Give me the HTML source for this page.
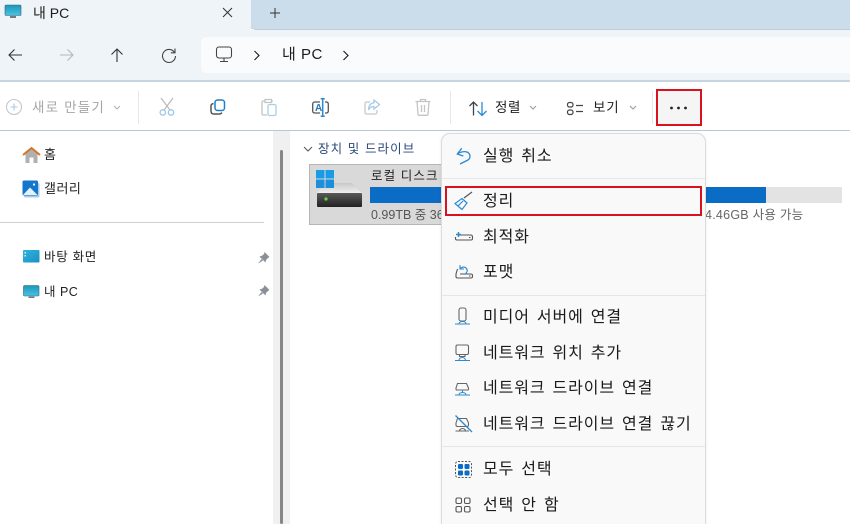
<!DOCTYPE html>
<html lang="ko"><head><meta charset="utf-8"><style>
html,body{margin:0;padding:0;width:850px;height:524px;overflow:hidden;background:#fff}
#w{position:absolute;left:0;top:0;width:850px;height:524px;overflow:hidden;background:#fff;font-family:"Liberation Sans","Noto Sans CJK KR",sans-serif;color:#1c1c1c}
.a{position:absolute}
.t{position:absolute;white-space:pre;line-height:20px;height:20px}
.m{font-size:16px;left:483px;letter-spacing:.9px;word-spacing:1.700px;color:#1a1a1a;margin-top:2px}
.s{font-size:12.5px;color:#222}
svg{position:absolute;overflow:visible;fill:none}
</style></head><body><div id="w">
<div class="a" style="left:0;top:0;width:850px;height:29px;background:#cbdcea"></div>
<div class="a" style="left:0;top:0;width:251px;height:30px;background:#eff4f9"></div>
<div class="a" style="left:251px;top:0;width:599px;height:29px;background:#cbdcea;border-bottom-left-radius:5px;border-bottom:1px solid #bccddb"></div>
<div class="a" style="left:0;top:30px;width:850px;height:50px;background:#eff4f9"></div>
<div class="a" style="left:201px;top:37px;width:649px;height:36px;background:#f9fbfd;border-radius:5px 0 0 5px"></div>
<div class="a" style="left:0;top:80px;width:850px;height:2px;background:#c6d5e0"></div>
<div class="a" style="left:0;top:130px;width:850px;height:1px;background:#b5c8d8"></div>

<svg style="left:5px;top:5px" width="17" height="15"><defs><linearGradient id="g" x1="0" y1="0" x2="0" y2="1"><stop offset="0" stop-color="#1b97b8"/><stop offset="1" stop-color="#48c3e6"/></linearGradient></defs><rect x="0" y="0" width="16" height="10.500" rx="1" fill="url(#g)" stroke="#3a6272" stroke-width=".6"/><rect x="5" y="11" width="6" height="2" fill="#6f7c84"/></svg>
<div class="t" style="left:33px;top:3px;font-size:14px">내 PC</div>
<svg style="left:223px;top:8px" width="9" height="9" stroke="#333" stroke-width="1"><path d="M0 0L9 9M9 0L0 9"/></svg>
<svg style="left:270px;top:8px" width="10" height="10" stroke="#333" stroke-width="1"><path d="M5 0V10M0 5H10"/></svg>

<svg style="left:7px;top:47px" width="16" height="16" stroke="#333" stroke-width="1.100"><path d="M15 8H2M7.500 2.500L2 8L7.500 13.500"/></svg>
<svg style="left:59px;top:47px" width="16" height="16" stroke="#b4b8bc" stroke-width="1.100"><path d="M1 8H14M8.500 2.500L14 8L8.500 13.500"/></svg>
<svg style="left:109px;top:47px" width="16" height="16" stroke="#333" stroke-width="1.100"><path d="M8 15V2M2.500 7.500L8 2L13.500 7.500"/></svg>
<svg style="left:161px;top:47px" width="16" height="16" stroke="#444" stroke-width="1.100"><path d="M13.500 5.500A6.500 6.500 0 1 0 14.500 9M14 1.500V5.800H9.800"/></svg>
<svg style="left:216px;top:46px" width="17" height="17" stroke="#444" stroke-width="1.100"><rect x=".5" y="1" width="15" height="11" rx="2.500"/><path d="M8 12V15M4 15.500H12"/></svg>
<svg style="left:253px;top:50px" width="8" height="11" stroke="#222" stroke-width="1.200"><path d="M1.500 1L6 5.500L1.500 10"/></svg>
<div class="t" style="left:282px;top:45px;font-size:15px;letter-spacing:.5px">내 PC</div>
<svg style="left:342px;top:50px" width="8" height="11" stroke="#222" stroke-width="1.200"><path d="M1.500 1L6 5.500L1.500 10"/></svg>

<svg style="left:6px;top:99px" width="17" height="17" stroke="#c4c8cc" stroke-width="1.100"><circle cx="8" cy="8" r="7.500"/><path d="M8 4.500V11.500M4.500 8H11.500" stroke="#a9cbe6"/></svg>
<div class="t" style="left:32px;top:98px;font-size:13.500px;color:#a6a6a6;letter-spacing:1.200px">새로 만들기</div>
<svg style="left:113px;top:105px" width="8" height="5" stroke="#b0b0b0"><path d="M1 1L4 4L7 1"/></svg>
<div class="a" style="left:138px;top:91px;width:1px;height:33px;background:#e8e8e8"></div>
<svg style="left:159px;top:98px" width="16" height="19" stroke="#bcbcbc" stroke-width="1.300"><path d="M2 0L11 12M14 0L5 12"/><circle cx="3.800" cy="14.500" r="2.700" stroke="#9cc6e6"/><circle cx="12" cy="14.500" r="2.700" stroke="#9cc6e6"/></svg>
<svg style="left:210px;top:99px" width="16" height="17" stroke-width="1.500"><path d="M3.500 4.500C1.800 4.800 1 5.700 1 7V12C1 14 2 15 4 15H9.500C10.500 15 11.300 14.500 11.800 13.500" stroke="#555"/><rect x="5" y="1" width="9.500" height="10.500" rx="2.500" stroke="#1f7fc8"/></svg>
<svg style="left:261px;top:98px" width="16" height="19" stroke-width="1.300"><path d="M4 3H2.500C1.500 3 1 3.500 1 4.500V15.500C1 16.500 1.500 17 2.500 17H6M12 3H10.500M4 1.500H10.500V4.500H4Z" stroke="#c4c4c4"/><rect x="7" y="6.500" width="8" height="11" rx="1.500" stroke="#a8cfea"/></svg>
<svg style="left:312px;top:98px" width="18" height="20" stroke-width="1.300"><path d="M8 4H3C1.500 4 .7 4.800 .7 6V13C.7 14.200 1.500 15 3 15H8M13 4H14C15.500 4 16.300 4.800 16.300 6V13C16.300 14.200 15.500 15 14 15H13" stroke="#555"/><path d="M10.700 1V18M8.700 .7H12.700M8.700 18.300H12.700" stroke="#2b8ad2" stroke-width="1.500"/><text x="3" y="13" font-size="10" font-weight="bold" fill="#2378bd" stroke="none" font-family="Liberation Sans">A</text></svg>
<svg style="left:364px;top:99px" width="17" height="17" stroke-width="1.300"><path d="M6 3H3C1.700 3 1 3.700 1 5V13C1 14.300 1.700 15 3 15H11C12.300 15 13 14.300 13 13V11" stroke="#c8c8c8"/><path d="M10 1L15.500 5.500L10 10V7.500C7.500 7.500 5.500 8.500 4.500 11C4.500 7 6.500 4 10 3.800Z" stroke="#a4cbe8"/></svg>
<svg style="left:415px;top:98px" width="16" height="18" stroke="#c4c4c4" stroke-width="1.300"><path d="M.5 3.500H15.500M5.500 3.500V1.500H10.500V3.500M2 3.500L3 16C3 16.800 3.500 17.300 4.300 17.300H11.700C12.500 17.300 13 16.800 13 16L14 3.500M6.500 7V14M9.500 7V14"/></svg>
<div class="a" style="left:450px;top:91px;width:1px;height:33px;background:#e8e8e8"></div>
<svg style="left:469px;top:101px" width="18" height="16" stroke-width="1.300"><path d="M4.500 14.500V1M.5 5L4.500 1L8.500 5" stroke="#444"/><path d="M13 1V14.500M8.500 10L13 14.500L17.500 10" stroke="#2b8ad2"/></svg>
<div class="t" style="left:495px;top:98px;font-size:13.500px;letter-spacing:.6px;color:#222">정렬</div>
<svg style="left:529px;top:105px" width="8" height="5" stroke="#999"><path d="M1 1L4 4L7 1"/></svg>
<svg style="left:566px;top:101px" width="18" height="15" stroke-width="1.200"><rect x="1.500" y="1.500" width="5.500" height="4.500" rx="2" stroke="#444"/><rect x="1.500" y="9" width="5.500" height="4.500" rx="2" stroke="#444"/><path d="M10 4.500H17M10 10.500H17" stroke="#444"/></svg>
<div class="t" style="left:593px;top:98px;font-size:13.500px;letter-spacing:.8px;color:#222">보기</div>
<svg style="left:629px;top:105px" width="8" height="5" stroke="#999"><path d="M1 1L4 4L7 1"/></svg>
<div class="a" style="left:652px;top:91px;width:1px;height:33px;background:#e8e8e8"></div>
<div class="a" style="left:656px;top:89px;width:46px;height:37px;box-sizing:border-box;background:#f5f5f5;border:2px solid #d9121f"></div>
<svg style="left:669px;top:106px" width="20" height="4"><circle cx="2.500" cy="2" r="1.400" fill="#222"/><circle cx="9.500" cy="2" r="1.400" fill="#222"/><circle cx="16.500" cy="2" r="1.400" fill="#222"/></svg>

<div class="a" style="left:273px;top:131px;width:17px;height:393px;background:#f0f0f0"></div>
<div class="a" style="left:280px;top:150px;width:3px;height:374px;background:#868686;border-radius:2px"></div>
<div class="a" style="left:0;top:222px;width:264px;height:1px;background:#cfcfcf"></div>

<svg style="left:22px;top:146px" width="19" height="18"><path d="M3.500 8V17H7.500V11.500H11.500V17H15.500V8L9.500 3Z" fill="#b0b0b0"/><path d="M1 9L9.500 2L18 9" stroke="#d2752a" stroke-width="2"/></svg>
<div class="t s" style="left:44px;top:145px;font-size:13px">홈</div>
<svg style="left:22px;top:180px" width="18" height="18"><rect x="2" y="3" width="15.500" height="14.500" rx="1.500" fill="#a8cdea"/><rect x="0.500" y="0.500" width="15.500" height="15" rx="1.500" fill="#1477cc"/><path d="M1 15L8 7.500L15.500 15Z" fill="#e6f2fb"/><circle cx="12" cy="4.500" r="1.100" fill="#fff"/></svg>
<div class="t s" style="left:44px;top:179px;font-size:13px;letter-spacing:.5px">갤러리</div>
<svg style="left:23px;top:250px" width="17" height="13"><defs><linearGradient id="h" x1="0" y1="0" x2="1" y2="1"><stop offset="0" stop-color="#2eb6dc"/><stop offset="1" stop-color="#1b8fc4"/></linearGradient></defs><rect width="16.500" height="12.500" rx="1" fill="url(#h)"/><rect x="1.500" y="2" width="1.500" height="1.500" fill="#d5f2fa"/><rect x="1.500" y="5" width="1.500" height="1.500" fill="#d5f2fa"/></svg>
<div class="t s" style="left:44px;top:247px;letter-spacing:.7px">바탕 화면</div>
<svg style="left:23px;top:285px" width="17" height="14"><rect x=".5" y=".5" width="15.500" height="10.500" rx="1" fill="url(#g)" stroke="#3a6272" stroke-width=".6"/><rect x="5.500" y="11.500" width="6" height="1.500" fill="#6d7a82"/></svg>
<div class="t s" style="left:44px;top:282px;letter-spacing:.5px">내 PC</div>
<svg style="left:258px;top:252px" width="12" height="12"><path d="M6.500 0L11.500 5L10 6L8 8L7.500 10.500L1.500 4.500L4 3.800L6 2ZM3.500 7L0 11.500L5 8.500Z" fill="#8a9096"/></svg>
<svg style="left:258px;top:285px" width="12" height="12"><path d="M6.500 0L11.500 5L10 6L8 8L7.500 10.500L1.500 4.500L4 3.800L6 2ZM3.500 7L0 11.500L5 8.500Z" fill="#8a9096"/></svg>

<svg style="left:303px;top:146px" width="10" height="6" stroke="#555"><path d="M1 1L5 5L9 1"/></svg>
<div class="t" style="left:318px;top:139px;font-size:12.500px;color:#2b4a7a;letter-spacing:1.100px">장치 및 드라이브</div>
<div class="a" style="left:309px;top:164px;width:150px;height:61px;box-sizing:border-box;background:#d9d9d9;border:1px solid #b5b5b5"></div>
<div class="a" style="left:370px;top:187px;width:472px;height:16px;background:#e3e3e3"></div>
<div class="a" style="left:370px;top:187px;width:396px;height:16px;background:#0a6cc4"></div>
<svg style="left:316px;top:170px" width="48" height="38"><defs><linearGradient id="d" x1="0" y1="0" x2="0" y2="1"><stop offset="0" stop-color="#5a5a5a"/><stop offset="1" stop-color="#222"/></linearGradient><linearGradient id="e" x1="0" y1="0" x2="0" y2="1"><stop offset="0" stop-color="#c8c8c8"/><stop offset="1" stop-color="#efefef"/></linearGradient></defs><path d="M1 23L9 13H36L46 23Z" fill="url(#e)"/><rect x="1" y="23" width="45" height="14" rx="1" fill="url(#d)"/><circle cx="10" cy="29" r="1.600" fill="#5fdc3a"/><rect width="8.500" height="8.500" fill="#1a9be6"/><rect x="9.500" width="8.500" height="8.500" fill="#1a9be6"/><rect y="9.500" width="8.500" height="8.500" fill="#1b8fdc"/><rect x="9.500" y="9.500" width="8.500" height="8.500" fill="#1b8fdc"/></svg>
<div class="t" style="left:371px;top:166px;font-size:12.500px;letter-spacing:1.100px;color:#222">로컬 디스크</div>
<div class="t" style="left:371px;top:205px;font-size:12.500px;color:#555">0.99TB 중 36</div>
<div class="t" style="left:705px;top:205px;font-size:12.500px;color:#666;letter-spacing:.25px">4.46GB 사용 가능</div>

<div class="a" style="left:441px;top:133px;width:265px;height:400px;box-sizing:border-box;background:#f9f9f9;border:1px solid #dcdcdc;border-radius:9px;box-shadow:0 0 3px rgba(0,0,0,.08)"></div>
<div class="a" style="left:442px;top:178px;width:263px;height:1px;background:#e6e6e6"></div>
<div class="a" style="left:442px;top:295px;width:263px;height:1px;background:#e6e6e6"></div>
<div class="a" style="left:442px;top:446px;width:263px;height:1px;background:#e6e6e6"></div>
<div class="a" style="left:445px;top:186px;width:257px;height:30px;box-sizing:border-box;border:2px solid #d9121f"></div>

<svg style="left:455px;top:146px" width="17" height="19" stroke="#2b8ad2" stroke-width="1.300"><path d="M6.700 2.300L2.300 8L8.300 10M2.300 8C5 6 9 5 12 6C15.500 7.500 16 12 13 14L5 18"/></svg>
<div class="t m" style="top:145px">실행 취소</div>
<svg style="left:454px;top:191px" width="20" height="20" stroke-width="1.200"><path d="M10 7L18 1" stroke="#555"/><path d="M8 7.500L13 12L8 18.500L1 12.500ZM4 15L9 10" stroke="#2b8ad2"/></svg>
<div class="t m" style="top:190px">정리</div>
<svg style="left:454px;top:227px" width="20" height="16" stroke-width="1.100"><path d="M5 8H16.500C18 8 18.500 9 18.500 10V11.500C18.500 12.500 18 13 17 13H3C2 13 1.500 12.500 1.500 11.500V10" stroke="#555"/><path d="M15 10.500H16.500" stroke="#555"/><path d="M4.500 5V10M2 7.500H7" stroke="#2b8ad2" stroke-width="1.500"/></svg>
<div class="t m" style="top:226px">최적화</div>
<svg style="left:454px;top:263px" width="20" height="20" stroke-width="1.100"><path d="M3.500 6L2 11V13.500C2 14.500 2.500 15 3.500 15H17C18 15 18.500 14.500 18.500 13.500V12.500C18.500 11.500 18 11 17 11H6M15 13H16.500" stroke="#555"/><path d="M6 2V6H10M6 6C8 3.500 11 3.500 12.500 5.500C14 7.500 13 10 11 11" stroke="#2b8ad2"/></svg>
<div class="t m" style="top:261px">포맷</div>

<svg style="left:454px;top:307px" width="20" height="20" stroke-width="1.100"><rect x="5" y="1" width="7" height="13" rx="2" stroke="#666"/><path d="M1 17H16M5 17C5 15.500 6.500 14.500 8.500 14.500C10.500 14.500 12 15.500 12 17" stroke="#2b8ad2"/></svg>
<div class="t m" style="top:306px">미디어 서버에 연결</div>
<svg style="left:454px;top:343px" width="20" height="20" stroke-width="1.100"><rect x="2" y="2" width="12.500" height="9.500" rx="1.500" stroke="#666"/><path d="M5.500 11.500V13.500H11V11.500" stroke="#666"/><path d="M1 17.500H16M5 17.500C5 15.500 6.500 14.500 8.300 14.500C10 14.500 11.500 15.500 11.500 17.500" stroke="#2b8ad2"/></svg>
<div class="t m" style="top:342px">네트워크 위치 추가</div>
<svg style="left:454px;top:379px" width="20" height="20" stroke-width="1.100"><path d="M2 9L3.500 4.500H12.500L14.500 9V10C14.500 10.500 14 11 13.500 11H3C2.500 11 2 10.500 2 10Z" stroke="#666"/><path d="M1 16H16M5 16C5 14.500 6.500 13.500 8.500 13.500C10.500 13.500 12 14.500 12 16M8.500 11V13.500" stroke="#2b8ad2"/></svg>
<div class="t m" style="top:377px">네트워크 드라이브 연결</div>
<svg style="left:455px;top:415px" width="20" height="20" stroke-width="1.100"><path d="M1 8L2.500 3.500H11.500L13.500 8V10C13.500 11 13 11.500 12 11.500H2.500C1.500 11.500 1 11 1 10Z" stroke="#666"/><path d="M.5 16H14M4.500 16C4.500 14.500 6 13.500 7.500 13.500C9 13.500 10.500 14.500 10.500 16" stroke="#666"/><path d="M.5 .5L17 17" stroke="#2b8ad2" stroke-width="1.300"/></svg>
<div class="t m" style="top:413px">네트워크 드라이브 연결 끊기</div>

<svg style="left:455px;top:461px" width="17" height="17"><rect x=".5" y=".5" width="16" height="16" rx="2.500" stroke="#555" stroke-dasharray="2 1.500"/><rect x="3" y="3" width="5" height="5" rx="1.200" fill="#0a6cc4"/><rect x="9.500" y="3" width="5" height="5" rx="1.200" fill="#0a6cc4"/><rect x="3" y="9.500" width="5" height="5" rx="1.200" fill="#0a6cc4"/><rect x="9.500" y="9.500" width="5" height="5" rx="1.200" fill="#0a6cc4"/></svg>
<div class="t m" style="top:458px">모두 선택</div>
<svg style="left:455px;top:497px" width="16" height="16" stroke="#555" stroke-width="1.100"><rect x="1" y="1" width="5.500" height="5.500" rx="1.500"/><rect x="9.500" y="1" width="5.500" height="5.500" rx="1.500"/><rect x="1" y="9.500" width="5.500" height="5.500" rx="1.500"/><rect x="9.500" y="9.500" width="5.500" height="5.500" rx="1.500"/></svg>
<div class="t m" style="top:494px">선택 안 함</div>
</div></body></html>
